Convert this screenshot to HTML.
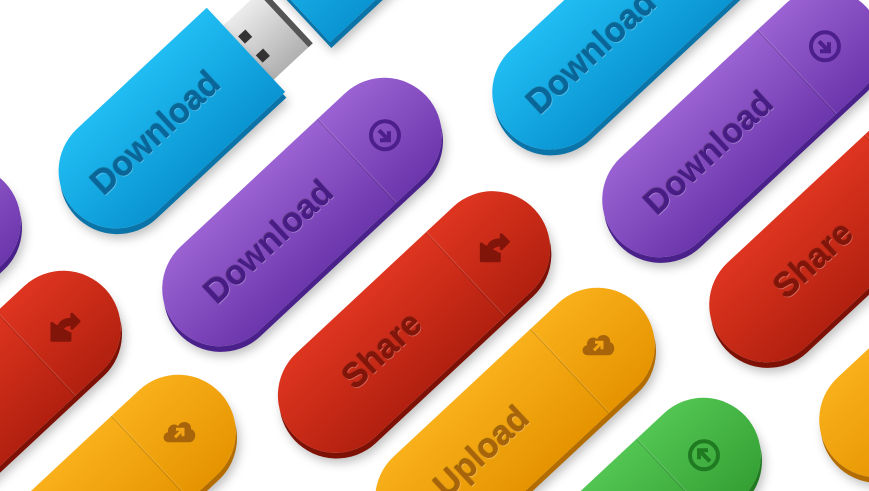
<!DOCTYPE html>
<html><head><meta charset="utf-8"><style>
html,body{margin:0;padding:0;width:869px;height:491px;overflow:hidden;background:#fff}
#w{position:relative;width:869px;height:491px;overflow:hidden}
.p{position:absolute;height:115px;transform:translate(-50%,-50%) rotate(-43deg);border-radius:58px;}
.p .t{position:absolute;font-family:"Liberation Sans",sans-serif;font-weight:bold;font-size:34px;top:50%;transform:translate(-50%,-52%);white-space:nowrap;text-shadow:0 1px 0 rgba(255,255,255,.3),0 -1px 1px rgba(0,0,0,.45)}
.p .dv{position:absolute;top:0;bottom:0;width:1px;background:rgba(0,0,0,.15);box-shadow:1px 0 0 rgba(255,255,255,.15)}
.p svg{position:absolute;top:50%;width:40px;height:40px;transform:translate(-50%,-50%) rotate(43deg)}
.blue{background:linear-gradient(#20bdf3,#0a94d2);box-shadow:-3px 5px 0 #0a73a8,-4px 10px 10px rgba(0,0,0,.25);color:#0a6699}
.purple{background:linear-gradient(#9a62d2,#6c36ac);box-shadow:-3px 5px 0 #4a218a,-4px 10px 10px rgba(0,0,0,.25);color:#481c85}
.red{background:linear-gradient(#de3520,#b2200f);box-shadow:-3px 5px 0 #7e1106,-4px 10px 10px rgba(0,0,0,.25);color:#82150a}
.orange{background:linear-gradient(#f9b01a,#e59400);box-shadow:-3px 5px 0 #b26c00,-4px 10px 10px rgba(0,0,0,.25);color:#a8640a}
.green{background:linear-gradient(#52c552,#34a034);box-shadow:-3px 5px 0 #217a21,-4px 10px 10px rgba(0,0,0,.25);color:#1f7a22}
</style></head><body><div id="w">

<div class="p blue" style="left:364px;top:-68px;width:200px;border-radius:0 58px 58px 0"></div>

<div style="position:absolute;left:262px;top:40px;width:64px;height:74px;transform:translate(-50%,-50%) rotate(-43deg);background:linear-gradient(#ececec,#b0b0b0);border-right:6px solid #555;">
  <div style="position:absolute;left:20px;top:18px;width:10px;height:10px;background:#333"></div>
  <div style="position:absolute;left:20px;top:44px;width:10px;height:10px;background:#333"></div>
</div>
<div class="p blue" style="left:160px;top:130px;width:235px;border-radius:58px 0 0 58px"><div class="t" style="left:112px">Download</div></div>

<div class="p blue" style="left:654px;top:-5px;width:400px"><div class="t" style="left:115px">Download</div></div>

<div class="p purple" style="left:-119px;top:299px;width:340px"></div>

<div class="p purple" style="left:302px;top:212px;width:340px"><div class="t" style="left:125px">Download</div><div class="dv" style="left:244px"></div>
<svg viewBox="0 0 40 40" style="left:283px"><circle cx="20" cy="20" r="14" fill="none" stroke="#4d1f8c" stroke-width="4"/><path d="M14 15 L24 25 M24 16 V25 H15" fill="none" stroke="#4d1f8c" stroke-width="4"/></svg></div>

<div class="p purple" style="left:742px;top:123px;width:340px"><div class="t" style="left:125px">Download</div><div class="dv" style="left:244px"></div>
<svg viewBox="0 0 40 40" style="left:283px"><circle cx="20" cy="20" r="14" fill="none" stroke="#4d1f8c" stroke-width="4"/><path d="M14 15 L24 25 M24 16 V25 H15" fill="none" stroke="#4d1f8c" stroke-width="4"/></svg></div>

<div class="p red" style="left:-19px;top:405px;width:340px"><div class="dv" style="left:244px"></div>
<svg viewBox="0 0 40 40" style="left:283px"><path d="M8 14 V32 H26 V24 M14 24 C14 14 20 11 28 11 V6 L35 13 L28 20 V16 C22 16 18 19 14 24 Z" fill="#82150a" stroke="#82150a" stroke-width="3" stroke-linejoin="round"/></svg></div>

<div class="p red" style="left:414px;top:322px;width:330px"><div class="t" style="left:122px">Share</div><div class="dv" style="left:234px"></div>
<svg viewBox="0 0 40 40" style="left:273px"><path d="M8 14 V32 H26 V24 M14 24 C14 14 20 11 28 11 V6 L35 13 L28 20 V16 C22 16 18 19 14 24 Z" fill="#82150a" stroke="#82150a" stroke-width="3" stroke-linejoin="round"/></svg></div>

<div class="p red" style="left:849px;top:228px;width:340px"><div class="t" style="left:122px">Share</div><div class="dv" style="left:244px"></div></div>

<div class="p orange" style="left:96px;top:509px;width:340px"><div class="dv" style="left:244px"></div>
<svg viewBox="0 0 40 40" style="left:283px"><path d="M10 30 C3 30 3 21 9 20 C8 13 16 10 19 14 C22 7 33 9 32 17 C38 18 38 30 30 30 Z" fill="#a8640a"/><path d="M16 25 L24 17 M17 17 H24 V24" stroke="#f3a415" stroke-width="3" fill="none"/></svg></div>

<div class="p orange" style="left:515px;top:422px;width:340px"><div class="t" style="left:125px">Upload</div><div class="dv" style="left:244px"></div>
<svg viewBox="0 0 40 40" style="left:283px"><path d="M10 30 C3 30 3 21 9 20 C8 13 16 10 19 14 C22 7 33 9 32 17 C38 18 38 30 30 30 Z" fill="#a8640a"/><path d="M16 25 L24 17 M17 17 H24 V24" stroke="#f3a415" stroke-width="3" fill="none"/></svg></div>

<div class="p orange" style="left:959px;top:343px;width:340px"></div>

<div class="p green" style="left:621px;top:532px;width:340px"><div class="dv" style="left:244px"></div>
<svg viewBox="0 0 40 40" style="left:283px"><circle cx="20" cy="20" r="14" fill="none" stroke="#1f7a22" stroke-width="4"/><path d="M26 26 L15 15 M15 24 V15 H24" fill="none" stroke="#1f7a22" stroke-width="4"/></svg></div>

</div></body></html>
